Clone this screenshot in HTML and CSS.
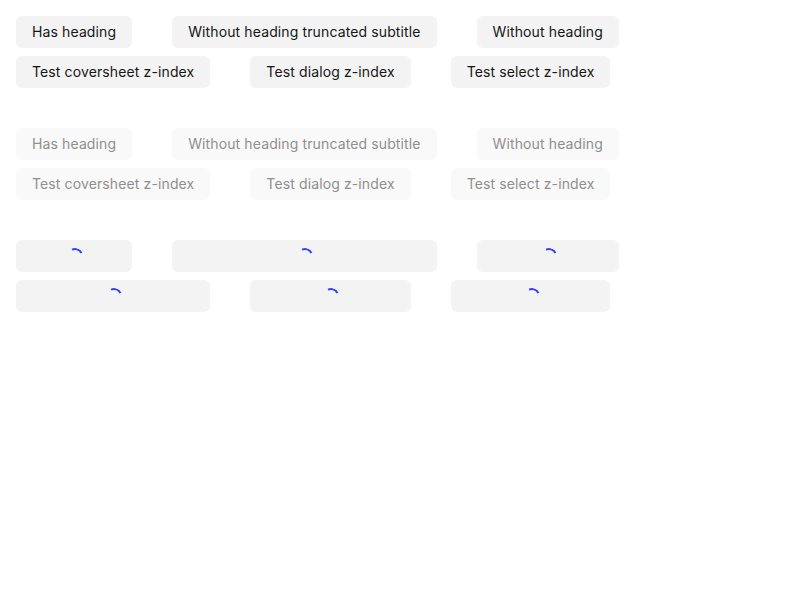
FILE: index.html
```html
<!DOCTYPE html>
<html>
<head>
<meta charset="utf-8">
<link rel="stylesheet" href="styles.css">
</head>
<body>
<div class="groups">
  <div class="group">
    <button class="btn">Has heading</button>
    <button class="btn">Without heading truncated subtitle</button>
    <button class="btn">Without heading</button>
    <button class="btn">Test coversheet z-index</button>
    <button class="btn">Test dialog z-index</button>
    <button class="btn">Test select z-index</button>
  </div>
  <div class="group">
    <button class="btn" disabled>Has heading</button>
    <button class="btn" disabled>Without heading truncated subtitle</button>
    <button class="btn" disabled>Without heading</button>
    <button class="btn" disabled>Test coversheet z-index</button>
    <button class="btn" disabled>Test dialog z-index</button>
    <button class="btn" disabled>Test select z-index</button>
  </div>
  <div class="group">
    <button class="btn loading"><span class="label">Has heading</span><span class="spinner"></span></button>
    <button class="btn loading"><span class="label">Without heading truncated subtitle</span><span class="spinner"></span></button>
    <button class="btn loading"><span class="label">Without heading</span><span class="spinner"></span></button>
    <button class="btn loading"><span class="label">Test coversheet z-index</span><span class="spinner"></span></button>
    <button class="btn loading"><span class="label">Test dialog z-index</span><span class="spinner"></span></button>
    <button class="btn loading"><span class="label">Test select z-index</span><span class="spinner"></span></button>
  </div>
</div>
</body>
</html>
```

FILE: styles.css
```css
html, body {
  margin: 0;
  padding: 0;
  background: #ffffff;
}
body {
  font-family: Inter, "Liberation Sans", sans-serif;
}
.groups {
  padding: 16px;
  display: flex;
  flex-direction: column;
  gap: 40px;
}
.group {
  display: flex;
  flex-wrap: wrap;
  column-gap: 40px;
  row-gap: 8px;
}
.btn {
  position: relative;
  height: 32px;
  padding: 0 16px;
  border: none;
  border-radius: 6px;
  background: #f3f3f3;
  color: #161616;
  font-family: Inter, "Liberation Sans", sans-serif;
  font-size: 14px;
  font-weight: 400;
  letter-spacing: 0.12px;
  line-height: 32px;
  white-space: nowrap;
}
.btn:disabled {
  background: #f9f9f9;
  color: #8f8f8f;
}
.btn.loading .label {
  visibility: hidden;
}
.spinner {
  position: absolute;
  left: 50%;
  top: 50%;
  width: 12px;
  height: 12px;
  margin: -8px 0 0 -7px;
  border-radius: 50%;
  border: 2px solid transparent;
  border-top-color: #3340ff;
  transform: rotate(20deg);
}
```
